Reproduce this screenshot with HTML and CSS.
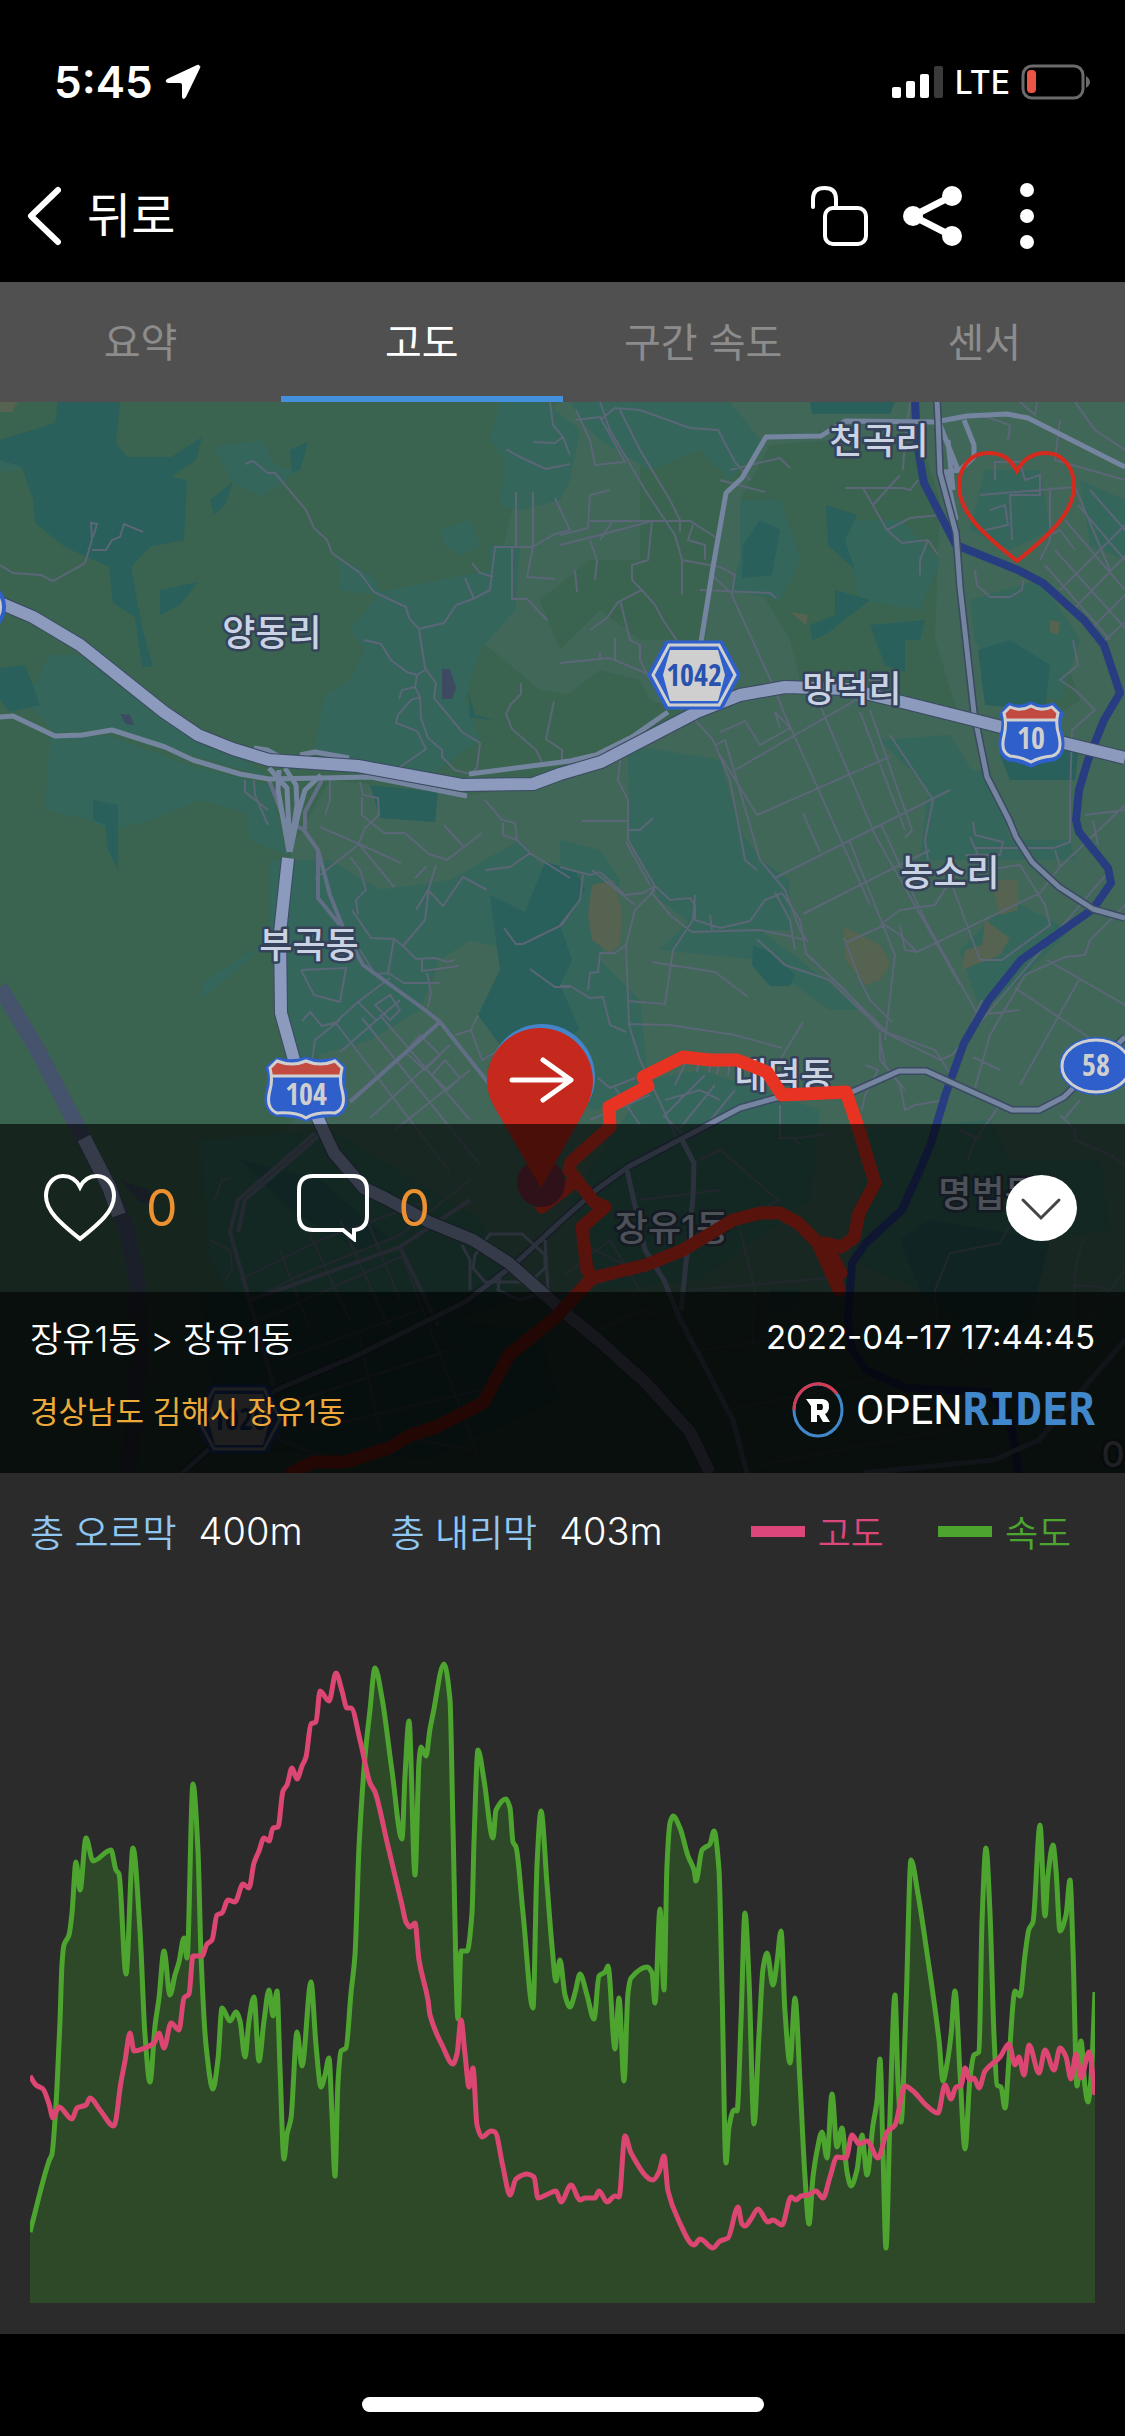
FILE: index.html
```html
<!DOCTYPE html>
<html lang="ko">
<head>
    <meta charset="UTF-8">
    <meta name="viewport" content="width=device-width, initial-scale=1.0">
    <title>오픈라이더 - 고도</title>
    <link rel="stylesheet" href="styles.css">
</head>
<body>

<div class="status-bar">
    <div class="status-left">
        <span class="time">5:45</span>
        <svg class="location-icon" viewBox="0 0 36 36"><path d="M34 2Q35 0 32 1L2 15Q-1 18 3 19H15Q17 19 17 21V33Q18 37 21 33L35 4Q36 1 34 2Z" fill="#fff"/></svg>
    </div>
    <div class="status-right">
        <svg class="signal-icon" viewBox="0 0 52 34">
            <rect x="0" y="22" width="9" height="11" rx="2" fill="#fff"/>
            <rect x="14" y="16" width="9" height="17" rx="2" fill="#fff"/>
            <rect x="28" y="9" width="9" height="24" rx="2" fill="#fff"/>
            <rect x="42" y="1" width="9" height="32" rx="2" fill="#3a3a3a"/>
        </svg>
        <span class="network">LTE</span>
        <svg class="battery-icon" viewBox="0 0 70 36">
            <rect x="2" y="2" width="60" height="32" rx="9" fill="none" stroke="#6b6b6b" stroke-width="3"/>
            <rect x="6" y="6" width="9" height="23" rx="4" fill="#eb5545"/>
            <path d="M65 12Q69 15 69 18T65 24Z" fill="#6b6b6b"/>
        </svg>
    </div>
</div>

<header class="nav-bar">
    <button class="back-button" type="button">
        <svg class="back-icon" viewBox="0 0 34 60"><path d="M31 4L4 30L31 56" fill="none" stroke="#fff" stroke-width="6" stroke-linecap="round" stroke-linejoin="round"/></svg>
        <span>뒤로</span>
    </button>
    <div class="nav-actions">
        <button class="icon-button" type="button" aria-label="공개 설정">
            <svg width="60" height="62" viewBox="0 0 60 62" fill="none" stroke="#fff" stroke-width="4" stroke-linecap="round"><rect x="16" y="23" width="41" height="36" rx="8"/><path d="M4 22V14Q4 3 15.500 3T27 14V22"/></svg>
        </button>
        <button class="icon-button" type="button" aria-label="공유">
            <svg width="60" height="62" viewBox="0 0 60 62" stroke="#fff" stroke-width="7" fill="#fff"><path d="M49 11L10 31L49 51" fill="none"/><g stroke="none"><circle cx="10" cy="31" r="10"/><circle cx="49" cy="11" r="10"/><circle cx="49" cy="51" r="10"/></g></svg>
        </button>
        <button class="icon-button" type="button" aria-label="더보기">
            <svg width="60" height="66" viewBox="0 0 60 66" fill="#fff"><circle cx="30" cy="7" r="7"/><circle cx="30" cy="33" r="7"/><circle cx="30" cy="59" r="7"/></svg>
        </button>
    </div>
</header>

<nav class="tabs">
    <a class="tab" href="#summary">요약</a>
    <a class="tab active" href="#altitude">고도</a>
    <a class="tab" href="#section">구간 속도</a>
    <a class="tab" href="#sensor">센서</a>
</nav>

<section class="map-box">
    <svg class="map" viewBox="0 402 1125 1071" preserveAspectRatio="xMidYMid slice">
        <!-- Land -->
        <rect x="0" y="402" width="1125" height="1071" fill="#3a6450"/>
        <g class="field">
            <path d="M560 402H1125V1473H330L300 1300L270 1140L330 1090L300 1000L290 850L330 780L470 795L560 780L600 760L690 715L600 700L540 690L480 640L500 560L520 480L520 430Z"/>
            <path d="M545 540L580 520L600 560L590 640L560 640Z"/>
        </g>
        <g class="wood">
            <path d="M640 450L680 430L760 440L740 480L722 500L705 640L640 640L600 610L560 650L540 600L590 560L640 560Z"/>
            <path d="M770 445L830 440L920 440L940 500L935 640L960 720L880 695L800 680L790 640L760 590L770 540L740 500Z"/>
            <path d="M1000 640L1060 640L1080 700L1050 720L1000 700L980 680Z"/>
            <path d="M560 700L600 670L640 680L650 700L690 715L600 757L560 770Z"/>
        </g>
        <g class="brush">
            <path d="M500 402L545 402L580 430L570 480L560 500L520 510L500 505L505 460L490 440Z"/>
            <path d="M570 402L730 402L760 440L770 435L730 480L700 450L650 470L600 440L580 420Z"/>
            <path d="M214 447L262 440L276 467L298 470L262 497L233 483Z"/>
            <path d="M0 452L30 455L20 470L0 472Z"/>
            <path d="M338 560L372 575L380 592L490 570L490 545L520 545L515 610L480 650L465 700L480 740L430 775L315 752L318 730L325 695L350 680L365 650L350 630L378 595L340 590Z"/>
            <path d="M440 530L470 520L480 545L460 555L445 545Z"/>
            <path d="M25 700L50 655L80 655L160 718L240 758L270 778L160 745L110 728L55 733Z"/>
            <path d="M45 810L50 738L110 736L190 766L270 785L287 855L250 840L245 812L200 800L150 820L110 830L90 820Z"/>
            <path d="M270 860L330 860L380 890L450 880L520 840L570 900L550 960L470 940L440 960L420 1010L370 1040L300 1060L280 1020L285 930L200 1000L205 980L270 940Z"/>
            <path d="M628 745L720 760L740 830L760 860L790 880L790 930L700 930L660 900L630 840Z"/>
            <path d="M930 770L990 770L1010 840L1070 840L1075 860L920 860L925 820Z"/>
            <path d="M880 740L950 735L990 800L940 800Z"/>
            <path d="M740 500L780 500L800 560L780 600L730 590L740 560Z"/>
            <path d="M840 520L900 520L940 560L920 610L860 600Z"/>
            <path d="M970 600L1040 580L1080 640L1060 700L1000 690L975 640Z"/>
            <path d="M985 470L1040 470L1050 530L1010 550L970 530Z"/>
            <path d="M560 840L600 850L620 880L600 960L640 1000L650 1100L590 1110L560 1040Z"/>
            <path d="M660 950L700 910L760 930L800 960L860 1010L830 1010L760 960Z"/>
            <path d="M650 1080L700 1070L820 1110L810 1200L700 1280L600 1290L570 1200Z"/>
            <path d="M870 1130L990 1120L1010 1160L1100 1160L1110 1230L1000 1250L920 1290L850 1260Z"/>
            <path d="M960 950L1010 900L1070 930L1010 990L980 1010Z"/>
            <path d="M200 1140L330 1130L480 1220L520 1300L430 1330L240 1310L210 1260Z"/>
            <path d="M1080 480L1125 500V560L1090 545Z"/>
            <path d="M200 1290L540 1330L560 1400L430 1460L220 1450Z"/>
        </g>
        <g class="forest">
            <path d="M0 440L55 423L58 402H120L116 443L127 457L171 457L202 437L196 460L171 477L187 480L184 540L150 547L131 567L142 627L153 667H142L135 617L113 603L109 567L65 547L35 523L33 500L22 467L0 460Z"/>
            <path d="M160 590L198 582L180 605L160 615Z"/>
            <path d="M210 500L233 482L225 505L214 515Z"/>
            <path d="M290 450L308 442L300 470L292 472Z"/>
            <path d="M0 668L25 665L40 705L10 712L0 700Z"/>
            <path d="M370 785L438 792L435 822L380 818Z"/>
            <path d="M93 800L118 805L118 870L108 850L105 825L93 820Z"/>
            <path d="M468 690L475 715L495 720L470 718Z"/>
            <path d="M810 402H895L890 414H812Z"/>
            <path d="M743 545L760 520L780 530L772 575L742 578Z"/>
            <path d="M826 505L857 515L845 540L855 570L828 545Z"/>
            <path d="M835 590L870 600L825 635L812 640L810 625L835 615Z"/>
            <path d="M870 625L925 620L920 640L905 640L905 672L885 665Z"/>
            <path d="M978 650L1010 640L1050 665L1045 710L985 705Z"/>
            <path d="M1040 745L1080 740L1075 780L1010 780L1000 755Z"/>
            <path d="M490 895L525 912L545 862L575 870L585 890L560 925L572 960L560 985L580 1030L560 1040L500 1045L478 1015L500 970Z"/>
            <path d="M753 945L775 955L795 975L790 986H770L752 965Z"/>
            <path d="M240 1160L320 1180L390 1240L360 1250L290 1210Z"/>
            <path d="M900 1240L930 1220L1050 1240L1030 1320L980 1340L920 1290Z"/>
            <path d="M770 1290L800 1290L795 1310L770 1310Z"/>
        </g>
        <g class="bare">
            <path d="M592 885L613 880L622 910L620 945L610 953L592 940L588 915Z"/>
            <path d="M844 927L880 945L890 965L880 980L865 985L845 960Z"/>
            <path d="M990 880L1018 880L1018 910L1000 915Z"/>
            <path d="M985 920L1010 938L1000 955L962 970L965 950L982 945Z"/>
            <path d="M790 612L808 615L806 625Z"/>
            <path d="M1050 620L1060 622L1058 635L1050 632Z"/>
            <path d="M0 402H18L12 412H0Z"/>
        </g>
        <g fill="#3d4a62">
            <path d="M442 669H450L456 688L452 699H442Z"/>
            <path d="M120 714L130 715L134 725L126 724Z"/>
            <path d="M120 1180L150 1190L152 1205L140 1202Z"/>
        </g>

        <!-- Streets -->
        <path class="street" d="M0 565L13 573L41 575L53 581L85 563L92 540L91 523L97 524L93 537M92 550H106L112 540L120 537L124 524L143 532
            M245 464L253 461L268 473H275L306 510L314 528L327 540L332 553L360 573L374 592L406 607L409 618L419 629L444 623L456 605L473 599L490 590L495 547H532L555 534L570 530M516 547L516 492M533 547V492M533 547L527 577L555 579M512 548V599H527L547 620M555 498L570 530M465 578L474 599M472 563L480 573L493 577
            M419 629L425 668L436 683L434 698L462 732L480 743L477 768L470 774L455 770L442 757V750L428 738L421 718L420 697L415 687L417 675L425 670M364 640L381 644L391 660L407 672L417 675M415 687L402 690L399 699M420 697L411 700L398 715L396 723L417 731L426 749L400 767M521 683V694L511 704L506 714L512 729L536 750L542 762M554 701L546 739L562 750V762M506 449L520 457L546 469L570 464M550 402L553 425L563 437L570 455M533 442L555 443L563 437
            M254 780L255 795L268 825M245 780V792L268 810M330 780L330 800L325 815M360 782L363 795L378 798L379 815L365 828L358 845L315 879M320 827L359 844L401 863M362 797V815L384 833H405L429 854L447 860L482 833M444 825L463 846M359 844L394 887M350 857L360 870L366 890L356 900L358 914M352 910L371 938L394 939L403 946L416 959L435 958L447 962L455 960M403 946L425 920L429 888L436 865M416 910L428 890L443 906L463 877L487 890M394 939L388 973L375 974L360 950M427 866L415 878M422 959V971L459 966M388 973L404 983H440M427 973L431 993L428 1007M301 970L346 968L340 1002M301 970L314 995L340 1002M302 1021L310 1012L322 1026L337 1022M337 1021L358 1002L390 978M358 1002L376 1020M312 1060L315 1040L340 1020M335 1022L450 1172M362 1018L480 1165M380 1015L470 1120M350 1100L430 1030M370 1118L450 1045M395 1130L470 1070M340 1052L400 1000M420 1035L440 1055L425 1070L405 1052ZM445 1060L460 1078L447 1090L432 1075ZM375 1005L390 995L400 1010L390 1020Z
            M485 800L502 820L515 823L517 840L530 853L570 878M503 823V835L517 840M530 853L510 867L485 870M504 928L516 944H523L562 925L570 913M530 969L555 987H570M478 1015L471 1030L482 1060L508 1045M471 1030L455 1035"/>
        <path class="street" d="M576 410L590 440L595 465L625 462L600 417L575 420M600 420L615 408L640 410L690 428L718 430L735 462L750 480M600 402L610 430L645 490L675 535L682 560V595M620 410L640 450L670 500L680 520V532M588 528L590 495L610 490M588 528L560 535M590 521H690L720 540M600 540L612 522M560 545L600 535L652 521L648 560L632 565V580L642 590L618 602L607 618L590 630M642 590L655 605L663 620L680 645M590 540L597 560L595 580M575 570L577 592M720 480L765 492M700 590L770 593L776 598M730 470L780 458L790 468M713 576L731 593L775 690L785 715L870 905M682 560L720 567L735 575L732 593M693 525L688 540L705 545V560
            M845 488H903L910 490L918 480M863 488L887 530L902 543L928 540M887 530L910 518L940 515M928 540L920 560V575M928 540L938 555M903 470L905 440L910 402M873 505L900 475
            M980 495L1075 487L1110 570M995 480V462H1020L1025 480L1040 475V495H1010L1012 540M990 510L1005 505L1008 525L985 530M1050 487V540L1040 560M980 415L1010 425L1008 440M1020 402L1035 415L1037 402M1075 402L1095 430L1125 450M1060 420L1055 460L1125 480M1065 520L1125 590M1078 505L1125 560M1090 490L1125 530M1055 550L1125 628M1045 565L1110 640M1040 540L1060 530L1075 550M1060 590L1125 525M1075 608L1125 556M1090 630L1125 595M1100 645L1125 622
            M975 570L977 585L990 597L1010 597L1022 590L1023 580M1073 640L1078 665L1060 680L1075 690L1095 710L1072 730L1070 800V842L1054 848H975M560 663L610 658L650 675M620 600L630 640L640 645V660L650 680M615 638V660M600 652V658M620 760L618 780L628 800V840L655 886L650 895M582 821H628M628 830H640L653 818M626 842L650 885
            M695 720L713 740L730 780L745 860L757 870M716 745L725 740L747 815L760 860L785 890L800 930L808 942M720 732L745 721L760 745L790 728L775 712L780 728M735 770L890 680H868M870 710L912 830L905 838M860 712L905 830M890 735L920 780L933 800L925 840L928 860M720 755L757 815L889 757M775 878L950 790M803 813L820 852M849 840L895 955L885 1040M820 705L875 835L960 985M803 914L880 875L930 850M881 824L925 920L978 1015L1020 1010M880 925L900 910L935 905L960 865M845 943L885 925L900 935L917 952L1040 893L1060 867L1125 805
            M560 867L590 875L600 872L625 895L643 893L655 886L670 900L690 898L695 905V920L720 928L750 921L765 900L782 893M695 895L693 920L673 950L665 1004L628 1001M652 893L670 915L692 932L760 930L785 935L805 940M655 890L635 910L626 945L629 1025L640 1060L680 1145M710 915L712 930M592 870L635 905M583 875L580 900L560 925M626 945L615 953H600L598 972L590 973L588 990M560 986H570L590 998L603 997L610 1025L626 1032
            M652 962L715 972L748 997M628 1024L670 1025L735 1035L782 1048M780 1060L803 1022M775 892L790 920L795 950M782 893L800 920L806 953L890 1035L940 1060L952 1055L1110 870M805 953L845 990L880 1030L935 1050L950 1073L982 1000M757 939L785 965L830 980L860 1010L890 1035M844 938L860 980L870 1000L892 1022M952 885L980 960L1002 960L1050 925L1045 905L1020 865L985 870M900 925L905 950L918 952M970 837L978 855M973 822L975 835L1003 842L1000 855H965M1093 820L1098 845M1085 815L1125 810M1060 867L1055 850
            M1125 905L1090 940L1085 955L1065 957L1025 975L990 1035L975 1088M1047 960L1125 1005M1015 988L1060 1018L1100 1045M1080 978L1020 1085M973 1057L1000 1070M880 1032L880 1060L900 1085L905 1110L915 1105L945 1100M865 1065L878 1070L865 1095L862 1110M880 1040L885 1065L905 1090M1000 1105L975 1140L968 1160M960 1130L980 1140M1060 1115L1075 1130V1140L1110 1155L1125 1165M1065 1118L1080 1100
            M598 1078L610 1088L635 1078M615 1088L640 1125M590 1120L650 1095M665 1115L705 1075M680 1128L715 1085M700 1133L735 1090M663 1115L690 1140M665 1100L700 1090L720 1100M675 1085L690 1053M690 1053L730 1060L728 1075M700 1053L697 1072M712 1056L709 1072M720 1058L717 1074
            M780 1105V1138H800L825 1134M793 1138L800 1145M640 1200L720 1190M565 1275L610 1240L640 1290M575 1240L625 1265M560 1295L640 1270M740 1230L755 1290L752 1350M690 1290L830 1278M700 1160L720 1150L778 1200L690 1250M935 1290L950 1253L1000 1243L1010 1225M935 1290L937 1320L990 1390M1083 1240L1075 1270L1073 1340L1125 1270M1073 1285L1100 1287L1125 1300
            M215 1200L222 1180L232 1178M210 1240L230 1250L232 1270L225 1280M240 1280L320 1240L430 1200M250 1300L300 1275L400 1235L470 1180M260 1320L405 1255M280 1250L310 1330M310 1235L350 1320M340 1220L390 1330M365 1215L400 1300M400 1250L480 1460M280 1360L420 1310M300 1400L450 1350M310 1430L480 1390M250 1390L280 1440L330 1460M360 1340L380 1430M420 1440L470 1450M600 1330L640 1310L680 1320M700 1350L850 1330M730 1410L870 1380M760 1465L1000 1420"/>

        <!-- River -->
        <path class="river" d="M915 400L917 443L924 483L956 545L1018 570L1043 583L1084 620L1104 645L1120 693L1104 720L1088 760L1079 790L1076 820L1079 832L1108 868L1111 883L1093 909L1021 960L989 1000L964 1043L946 1093L931 1143L920 1170L902 1210L866 1243L852 1263L848 1320L852 1350L866 1370L906 1388L989 1392L1010 1420L1019 1473"/>

        <!-- Roads -->
        <path class="lane" d="M269 780L285 822L303 829L318 850V898L340 925M305 829V812L322 780M318 850L330 895L344 930L363 965L425 1010L440 1022L490 1085M440 1022L350 1102M315 1133L238 1200L230 1232L275 1390M322 1133L245 1200L238 1232M250 1300L400 1247L470 1200M400 1247L438 1325"/>
        <path class="road" d="M0 717L13 716L55 736L82 735L112 730L165 747L193 760L240 774L269 779L371 777L467 796"/>
        <path class="road" d="M469 774L570 761L596 755L632 737L668 712M300 755L315 752L349 758M254 748L267 750L280 757"/>
        <path class="road" d="M701 642L713 567L726 493L742 478L766 437L821 436L845 421L935 422L967 416L1007 414L1028 418L1125 467"/>
        <path class="road" d="M938 420L958 470M964 420L974 445V457L960 470L938 473M946 473L956 520M948 440L953 490M269 768L287 788L290 852M279 770L278 790L289 852M285 768L296 785L297 805L290 852M321 775L305 790L298 815L290 852"/>
        <path class="road-edge" d="M937 400L938 420L940 473L956 533L960 587L974 713L987 777L1009 820L1016 837L1032 862L1059 887L1093 909L1125 918"/>
        <path class="road" d="M937 400L938 420L940 473L956 533L960 587L974 713L987 777L1009 820L1016 837L1032 862L1059 887L1093 909L1125 918"/>
        <path class="road-edge" d="M1125 1037L1064 1097L1039 1110H1012L926 1071H899L852 1092L776 1098L740 1108L628 1167L596 1190L560 1222L516 1263L465 1302L358 1355L276 1390L182 1473"/>
        <path class="road" d="M1125 1037L1064 1097L1039 1110H1012L926 1071H899L852 1092L776 1098L740 1108L628 1167L596 1190L560 1222L516 1263L465 1302L358 1355L276 1390L182 1473"/>
        <path class="road" d="M627 1170L645 1250L664 1280L679 1317L733 1420L747 1473M682 1140L694 1163L693 1197L681 1310M863 1473L994 1460L1039 1440L1125 1340"/>
        <path d="M475 1255L490 1234H522L545 1255V1268L530 1282H485L473 1268ZM462 1245L470 1260V1290M545 1240L548 1290L520 1300L498 1290L500 1275" fill="none" stroke="#75839e" stroke-width="3"/>
        <path d="M0 987L36 1047L78 1128L109 1187L127 1230L137 1280L140 1353L129 1473" fill="none" stroke="#46536c" stroke-width="16"/>
        <path d="M84 1138L109 1187L119 1215" fill="none" stroke="#8c9bbd" stroke-width="14"/>
        <path class="highway-edge" d="M0 603L33 617L80 645L164 712L198 735L233 749L269 760L358 766L462 785L533 784L560 774L601 762L697 712L740 695L785 687L848 689L902 702L974 720L1064 743L1125 758M288 858L280 933L281 1013L294 1060L320 1123L334 1153L364 1188L385 1198L429 1222L473 1240L509 1263L570 1317L596 1338L646 1383L690 1432L710 1473"/>
        <path class="highway" d="M0 603L33 617L80 645L164 712L198 735L233 749L269 760L358 766L462 785L533 784L560 774L601 762L697 712L740 695L785 687L848 689L902 702L974 720L1064 743L1125 758M288 858L280 933L281 1013L294 1060L320 1123L334 1153L364 1188L385 1198L429 1222L473 1240L509 1263L570 1317L596 1338L646 1383L690 1432L710 1473"/>

        <!-- Place names -->
        <g class="place">
            <text x="272" y="646">양동리</text>
            <text x="879" y="454">천곡리</text>
            <text x="852" y="702">망덕리</text>
            <text x="950" y="886">농소리</text>
            <text x="309" y="958">부곡동</text>
            <text x="784" y="1089">내덕동</text>
            <text x="672" y="1241">장유1동</text>
            <text x="988" y="1207">명법동</text>
            <text x="1113" y="1467">0</text>
        </g>

        <!-- Route signs -->
        <circle cx="-20" cy="607" r="24" fill="#ccc" stroke="#2e5fcb" stroke-width="4"/>
        <g id="hex-sign">
            <path d="M667 643H721L738 675L721 707H667L650 675Z" fill="#2e5fcb" stroke="#2e5fcb" stroke-width="5" stroke-linejoin="round"/>
            <path d="M669 645H719L735 675L719 705H669L653 675Z" fill="none" stroke="#cfcfcf" stroke-width="3"/>
            <path d="M670 650H718L725 675L718 701H670L663 675Z" fill="#cfcfcf"/>
        </g>
        <text class="sign sign-blue" x="694" y="686">1042</text>
        <use href="#hex-sign" x="-455" y="744"/>
        <text class="sign sign-blue" x="239" y="1430">1020</text>
        <g>
            <path d="M1009 705Q1020 710 1031 704Q1042 710 1053 705L1061 714Q1057 724 1061 735Q1065 755 1053 759Q1040 760 1031 765Q1022 760 1009 759Q998 754 1002 735Q1006 724 1002 714Z" fill="#2e5fcb" stroke="#2e5fcb" stroke-width="5" stroke-linejoin="round"/>
            <path d="M1005 719V713L1010 707Q1021 712 1031 706Q1041 712 1052 707L1058 713V719Z" fill="#c24a41"/>
            <path d="M1010 707Q1021 712 1031 706Q1041 712 1052 707L1058 713Q1055 724 1059 736Q1063 753 1052 756Q1040 757 1031 762Q1022 757 1010 756Q1000 752 1004 736Q1007 724 1004 713ZM1005 720H1057" fill="none" stroke="#cfcfcf" stroke-width="3"/>
        </g>
        <text class="sign" x="1031" y="749">10</text>
        <g>
            <path d="M277 1060Q292 1064 306 1059Q320 1064 335 1060L344 1068Q341 1080 344 1090Q349 1110 336 1114Q315 1115 306 1119Q297 1115 277 1114Q264 1110 268 1090Q272 1080 268 1068Z" fill="#2e5fcb" stroke="#2e5fcb" stroke-width="5" stroke-linejoin="round"/>
            <path d="M272 1075L270 1068L277 1062Q292 1067 306 1061Q320 1067 335 1062L342 1068L340 1075Z" fill="#c24a41"/>
            <path d="M277 1061Q292 1067 306 1061Q320 1067 335 1061L342 1068Q339 1080 342 1090Q347 1108 335 1113Q315 1112 306 1118Q297 1112 277 1113Q265 1108 270 1090Q273 1080 270 1068ZM272 1076H340" fill="none" stroke="#cfcfcf" stroke-width="3"/>
        </g>
        <text class="sign" x="306" y="1105">104</text>
        <ellipse cx="1096" cy="1066" rx="37" ry="29" fill="#2e5fcb"/>
        <ellipse cx="1096" cy="1066" rx="34" ry="26" fill="none" stroke="#cfcfcf" stroke-width="3"/>
        <text class="sign" x="1096" y="1076">58</text>

        <!-- Ride track -->
        <path class="track" d="M542 1207L574 1182M594 1278L587 1270L582 1227L605 1207L594 1202L569 1170L571 1162L610 1127L609 1107L648 1086L643 1077L683 1057L710 1060L737 1060L767 1072L782 1095L846 1092L859 1130L875 1183L859 1213L854 1238L841 1247L825 1243L841 1273L835 1274L839 1290L818 1243L798 1223L780 1213H760L733 1220L683 1250L646 1265L592 1278L556 1317L509 1355L483 1403L436 1427L411 1435L389 1448L345 1462H313L291 1473"/>
        <circle cx="541" cy="1183" r="24" fill="#7b2f45"/>
        <circle cx="542" cy="1077" r="53" fill="#4485c9"/>
        <path d="M541 1188L495 1108Q487 1095 487 1081A53 53 0 0 1 593 1081Q593 1095 585 1110Z" fill="#c5281c"/>
        <path d="M512 1080H569M543 1060L571 1080L543 1100" fill="none" stroke="#fff" stroke-width="5" stroke-linecap="round" stroke-linejoin="round"/>
        <path d="M1017 471C1009 456 999 453 988 453C970 453 959 468 959 486C959 514 988 538 1017 561C1046 538 1074 514 1074 486C1074 468 1063 453 1046 453C1034 453 1024 457 1017 471Z" fill="none" stroke="#d52b1f" stroke-width="4"/>
    </svg>

    <div class="map-overlay">
        <div class="action-bar">
            <button class="count-button" type="button" aria-label="좋아요">
                <svg width="72" height="68" viewBox="0 0 72 68"><path d="M36 13C32 5 26 2 19 2C9 2 2 11 2 22C2 38 19 51 36 65C53 51 70 38 70 22C70 11 63 2 53 2C46 2 40 5 36 13Z" fill="none" stroke="#fff" stroke-width="4"/></svg>
                <span>0</span>
            </button>
            <button class="count-button" type="button" aria-label="댓글">
                <svg width="72" height="68" viewBox="0 0 72 68"><path d="M16 2H56Q70 2 70 16V42Q70 55 57 56V65L46 56H16Q2 56 2 42V16Q2 2 16 2Z" fill="none" stroke="#fff" stroke-width="4"/></svg>
                <span>0</span>
            </button>
            <button class="fold-button" type="button" aria-label="접기">
                <svg width="71" height="66" viewBox="0 0 71 66"><path d="M17 25L35 43L53 25" fill="none" stroke="#444" stroke-width="3" stroke-linecap="round"/></svg>
            </button>
        </div>
        <div class="ride-info">
            <div class="ride-row">
                <span class="ride-title">장유1동 &gt; 장유1동</span>
                <span class="ride-date">2022-04-17 17:44:45</span>
            </div>
            <div class="ride-row">
                <span class="ride-place">경상남도 김해시 장유1동</span>
                <span class="logo">
                    <svg width="52" height="56" viewBox="0 0 52 56">
                        <ellipse cx="26" cy="28" rx="24" ry="26" fill="none" stroke="#4187cb" stroke-width="3"/>
                        <path d="M2 28A24 26 0 0 1 45 12" fill="none" stroke="#d63950" stroke-width="3"/>
                        <path d="M14 17H31Q38 18 37 26Q36 31 33 32L38 40H31L27 33H25V40H19V24Z" fill="#fff"/>
                        <path d="M25 22H30Q32 25 30 28H25Z" fill="#07100c"/>
                    </svg>
                    <span class="logo-open">OPEN</span><span class="logo-rider">RIDER</span>
                </span>
            </div>
        </div>
    </div>
</section>

<section class="chart-panel">
    <div class="stats">
        <dl class="stat">
            <dt>총 오르막</dt>
            <dd>400m</dd>
        </dl>
        <dl class="stat">
            <dt>총 내리막</dt>
            <dd>403m</dd>
        </dl>
        <div class="legend">
            <span class="legend-item altitude">고도</span>
            <span class="legend-item speed">속도</span>
        </div>
    </div>
    <svg class="chart" viewBox="0 0 1125 714">
        <clipPath id="plot"><rect x="30" y="0" width="1065" height="683"/></clipPath>
        <g clip-path="url(#plot)">
            <path class="speed-area" id="speed-area"/>
            <path class="speed-line" id="speed-line"/>
            <path class="altitude-line" id="altitude-line"/>
        </g>
    </svg>
</section>

<footer class="home-area">
    <div class="home-indicator"></div>
</footer>

<script src="chart.js"></script>
</body>
</html>
```

FILE: styles.css
```css
body {
    margin: 0;
    min-height: 100vh;
    display: flex;
    flex-direction: column;
    background-color: #000;
    color: #fff;
    font-family: Inter, "Noto Sans CJK KR", sans-serif;
}
button {
    padding: 0;
    border: none;
    background: none;
    color: inherit;
    font-family: inherit;
    cursor: pointer;
}
svg {
    display: block;
}

/* Status bar */
.status-bar {
    display: flex;
    justify-content: space-between;
    align-items: center;
    box-sizing: border-box;
    height: 150px;
    padding: 14px 34px 0 54px;
}
.status-left {
    display: flex;
    align-items: center;
    gap: 12px;
}
.status-right {
    display: flex;
    align-items: center;
    gap: 11px;
}
.time {
    font-size: 44px;
    font-weight: 600;
}
.network {
    font-size: 32px;
    font-weight: 500;
}
.location-icon {
    width: 36px;
    height: 36px;
}
.signal-icon {
    width: 52px;
    height: 34px;
}
.battery-icon {
    width: 70px;
    height: 36px;
}

/* Navigation */
.nav-bar {
    display: flex;
    justify-content: space-between;
    align-items: center;
    box-sizing: border-box;
    height: 132px;
    padding: 0 68px 0 27px;
}
.back-button {
    display: flex;
    align-items: center;
    gap: 26px;
    font-size: 48px;
    font-weight: 400;
    line-height: 60px;
}
.back-icon {
    width: 34px;
    height: 60px;
}
.nav-actions {
    display: flex;
    align-items: center;
    gap: 34px;
}

/* Tabs */
.tabs {
    display: grid;
    grid-template-columns: repeat(4, 1fr);
    height: 120px;
    background-color: #505050;
}
.tab {
    box-sizing: border-box;
    height: 120px;
    padding-top: 8px;
    border-bottom: 6px solid transparent;
    color: #8c8c8c;
    font-size: 40px;
    line-height: 106px;
    text-align: center;
    text-decoration: none;
}
.tab.active {
    border-color: #4490dc;
    color: #fff;
}

/* Map */
.map-box {
    position: relative;
}
.map {
    width: 100%;
    height: auto;
}
.field {
    fill: #406758;
}
.wood {
    fill: #3a6450;
}
.brush {
    fill: #34665c;
}
.forest {
    fill: #29605c;
}
.bare {
    fill: #566350;
}
.street {
    fill: none;
    stroke: #5b6677;
    stroke-width: 2;
}
.lane {
    fill: none;
    stroke: #626e85;
    stroke-width: 4;
}
.river {
    fill: none;
    stroke: #283c82;
    stroke-width: 8;
    stroke-linejoin: round;
}
.road {
    fill: none;
    stroke: #7585a0;
    stroke-width: 5;
    stroke-linejoin: round;
}
.road-edge {
    fill: none;
    stroke: #3b4962;
    stroke-width: 8;
}
.highway {
    fill: none;
    stroke: #8c9bbd;
    stroke-width: 12;
    stroke-linejoin: round;
}
.highway-edge {
    fill: none;
    stroke: #3b4962;
    stroke-width: 14;
    stroke-linejoin: round;
}
.place {
    fill: #c9d3e4;
    stroke: #35425a;
    stroke-width: 5;
    stroke-linejoin: round;
    paint-order: stroke;
    font-size: 36px;
    font-weight: 500;
    text-anchor: middle;
}
.sign {
    fill: #cfcfcf;
    font-family: "Liberation Sans Narrow", "Open Sans Condensed", Roboto, sans-serif;
    font-size: 30px;
    font-weight: 700;
    text-anchor: middle;
}
.sign-blue {
    fill: #2752b0;
}
.track {
    fill: none;
    stroke: #e83323;
    stroke-width: 13;
    stroke-linecap: round;
    stroke-linejoin: round;
}

/* Map overlay */
.map-overlay {
    position: absolute;
    right: 0;
    bottom: 0;
    left: 0;
}
.action-bar {
    display: flex;
    align-items: center;
    gap: 119px;
    height: 168px;
    padding: 0 48px 0 44px;
    background-color: rgba(0, 0, 0, 0.62);
}
.count-button {
    display: flex;
    align-items: center;
    gap: 30px;
    color: #ec9030;
    font-size: 50px;
    line-height: 68px;
}
.fold-button {
    margin-left: auto;
    border-radius: 50%;
    background-color: #fff;
}
.ride-info {
    display: flex;
    flex-direction: column;
    gap: 16px;
    box-sizing: border-box;
    height: 181px;
    padding: 16px 30px 0;
    background-color: rgba(0, 0, 0, 0.85);
}
.ride-row {
    display: flex;
    justify-content: space-between;
    align-items: center;
    height: 57px;
    white-space: nowrap;
}
.ride-title {
    font-size: 35px;
    font-weight: 350;
}
.ride-date {
    font-size: 33px;
}
.ride-place {
    color: #edaa3a;
    font-size: 31px;
}
.logo {
    display: flex;
    align-items: center;
    line-height: 56px;
}
.logo-open {
    margin-left: 12px;
    font-family: Roboto, sans-serif;
    font-size: 41px;
}
.logo-rider {
    color: #4187cb;
    font-family: "DejaVu Sans Mono", monospace;
    font-size: 44px;
    font-weight: 700;
}

/* Chart */
.chart-panel {
    background-color: #2b2b2b;
}
.stats {
    display: flex;
    align-items: center;
    gap: 88px;
    height: 116px;
    margin-bottom: 31px;
    padding: 0 62px 0 30px;
    font-size: 38px;
    white-space: nowrap;
}
.stat {
    display: flex;
    align-items: center;
    gap: 22px;
    margin: 0;
}
.stat dt {
    color: #8fc6f2;
    font-size: 37px;
    font-weight: 350;
}
.stat dd {
    margin: 0;
    font-weight: 350;
}
.legend {
    display: flex;
    gap: 54px;
    margin-left: auto;
    font-size: 36px;
    font-weight: 350;
}
.legend-item {
    display: flex;
    align-items: center;
    gap: 13px;
}
.legend-item::before {
    content: "";
    width: 54px;
    height: 11px;
    background-color: currentColor;
}
.legend-item.altitude {
    color: #dc467b;
}
.legend-item.speed {
    color: #4da530;
}
.chart {
    width: 100%;
    height: auto;
}
.speed-area {
    fill: #2d4927;
}
.speed-line {
    fill: none;
    stroke: #4da530;
    stroke-width: 5;
}
.altitude-line {
    fill: none;
    stroke: #dc4673;
    stroke-width: 5;
}

/* Home indicator */
.home-area {
    display: flex;
    flex: 1;
    justify-content: center;
    align-items: flex-end;
    padding: 24px;
}
.home-indicator {
    width: 402px;
    height: 15px;
    border-radius: 8px;
    background-color: #fff;
}
```

FILE: chart.js
```js
const BASELINE = 683;

const speed = [
    [30, 612], [49, 541], [52, 534], [55, 500], [57, 467], [60, 401], [62, 344], [64, 325], [69, 315], [72, 293],
    [76, 242], [80, 270], [86, 218], [93, 241], [111, 230], [116, 250], [119, 254], [126, 354], [133, 228], [140, 311],
    [145, 415], [150, 462], [155, 406], [159, 378], [164, 331], [170, 375], [175, 355], [179, 342], [184, 318], [187, 338],
    [193, 164], [198, 231], [201, 335], [206, 425], [213, 469], [218, 439], [222, 388], [230, 401], [236, 392], [240, 401],
    [245, 437], [249, 401], [254, 377], [259, 441], [264, 401], [269, 370], [273, 396], [277, 371], [280, 448], [284, 539],
    [287, 514], [291, 498], [297, 412], [302, 446], [311, 362], [316, 425], [321, 467], [325, 455], [329, 438], [332, 495],
    [335, 556], [338, 462], [341, 431], [346, 428], [351, 373], [355, 335], [359, 227], [365, 137], [370, 90], [375, 48],
    [382, 78], [392, 151], [402, 219], [405, 156], [409, 101], [415, 255], [419, 142], [421, 127], [426, 136], [430, 109],
    [433, 94], [444, 44], [450, 80], [453, 208], [458, 399], [461, 331], [467, 331], [472, 293], [474, 222], [478, 130],
    [484, 160], [493, 218], [496, 190], [506, 179], [510, 188], [513, 222], [516, 227], [523, 293], [533, 388], [537, 245],
    [541, 191], [547, 264], [552, 326], [556, 361], [560, 340], [565, 375], [570, 387], [575, 373], [580, 354], [587, 375],
    [594, 399], [599, 356], [605, 352], [608, 346], [615, 429], [619, 378], [624, 461], [628, 373], [631, 358], [647, 347],
    [652, 353], [655, 383], [660, 289], [664, 370], [667, 245], [670, 203], [673, 196], [680, 208], [688, 236], [694, 250],
    [696, 261], [702, 230], [710, 224], [714, 211], [719, 250], [722, 368], [726, 543], [729, 507], [734, 490], [737, 491],
    [741, 401], [745, 293], [749, 359], [754, 504], [759, 415], [763, 349], [767, 333], [773, 365], [777, 342], [781, 311],
    [785, 392], [790, 443], [795, 378], [800, 462], [805, 557], [809, 604], [813, 557], [817, 531], [822, 512], [827, 538],
    [832, 474], [837, 527], [842, 508], [847, 552], [851, 566], [857, 550], [862, 515], [867, 555], [873, 505], [877, 481],
    [880, 439], [883, 533], [886, 628], [890, 495], [895, 375], [898, 462], [901, 502], [906, 387], [911, 240], [918, 274],
    [927, 333], [939, 420], [943, 461], [947, 444], [951, 415], [955, 371], [960, 453], [965, 529], [970, 458], [974, 435],
    [979, 432], [982, 302], [986, 228], [990, 293], [994, 415], [997, 465], [1001, 467], [1005, 488], [1009, 439], [1015, 371],
    [1020, 376], [1025, 335], [1029, 309], [1033, 302], [1040, 205], [1045, 296], [1048, 255], [1053, 225], [1056, 250], [1060, 311],
    [1066, 295], [1070, 260], [1073, 330], [1077, 466], [1081, 421], [1085, 467], [1088, 482], [1091, 458], [1095, 372]
];

const altitude = [
    [30, 456], [36, 465], [43, 469], [49, 484], [53, 498], [59, 487], [72, 499], [77, 488], [86, 485], [90, 478],
    [100, 490], [114, 506], [121, 462], [125, 441], [130, 413], [134, 431], [145, 428], [154, 423], [159, 413], [164, 428],
    [171, 403], [179, 410], [184, 378], [189, 374], [193, 336], [202, 336], [207, 324], [212, 320], [217, 295], [222, 293],
    [228, 280], [235, 282], [243, 264], [249, 268], [254, 243], [259, 231], [264, 218], [269, 221], [273, 208], [278, 207],
    [283, 171], [287, 165], [292, 148], [297, 159], [302, 146], [306, 137], [311, 104], [316, 102], [320, 71], [329, 81],
    [336, 53], [342, 71], [347, 88], [351, 88], [360, 120], [370, 163], [375, 172], [387, 222], [402, 285], [406, 302],
    [410, 307], [415, 303], [419, 340], [428, 380], [430, 395], [442, 425], [453, 444], [457, 434], [461, 400], [465, 434],
    [469, 467], [473, 448], [477, 505], [482, 517], [491, 511], [495, 512], [503, 547], [510, 575], [516, 559], [527, 554],
    [534, 557], [538, 578], [550, 573], [556, 571], [561, 582], [571, 565], [580, 580], [585, 578], [595, 578], [599, 571],
    [607, 582], [615, 576], [619, 577], [625, 516], [631, 533], [653, 560], [659, 552], [664, 536], [668, 571], [678, 599],
    [694, 625], [700, 619], [713, 628], [720, 621], [728, 618], [738, 587], [742, 604], [745, 606], [751, 599], [758, 589],
    [768, 602], [773, 600], [782, 605], [791, 577], [796, 580], [801, 576], [808, 575], [816, 571], [823, 578], [830, 557],
    [837, 537], [846, 538], [852, 515], [859, 524], [867, 521], [878, 538], [887, 512], [895, 505], [905, 466], [913, 471],
    [927, 486], [938, 493], [945, 465], [951, 479], [956, 467], [961, 466], [965, 448], [970, 460], [974, 458], [979, 468],
    [985, 451], [1000, 437], [1009, 424], [1015, 445], [1019, 437], [1024, 455], [1029, 425], [1039, 453], [1045, 430], [1054, 450],
    [1060, 428], [1066, 437], [1071, 459], [1076, 434], [1081, 458], [1089, 432], [1095, 475]
];

// Smooth curve that never overshoots its points
function smoothPath(points) {
    const slopes = [];
    const tangents = [];
    for (let i = 0; i < points.length - 1; i++) {
        slopes.push((points[i + 1][1] - points[i][1]) / (points[i + 1][0] - points[i][0]));
    }
    for (let i = 0; i < points.length; i++) {
        if (i === 0) {
            tangents.push(slopes[0]);
        } else if (i === points.length - 1) {
            tangents.push(slopes[i - 1]);
        } else if (slopes[i - 1] * slopes[i] <= 0) {
            tangents.push(0);
        } else {
            tangents.push(2 * slopes[i - 1] * slopes[i] / (slopes[i - 1] + slopes[i]));
        }
    }

    let path = `M${points[0][0]},${points[0][1]}`;
    for (let i = 0; i < points.length - 1; i++) {
        const [x0, y0] = points[i];
        const [x1, y1] = points[i + 1];
        const dx = (x1 - x0) / 3;
        path += `C${x0 + dx},${y0 + dx * tangents[i]} ${x1 - dx},${y1 - dx * tangents[i + 1]} ${x1},${y1}`;
    }
    return path;
}

const speedPath = smoothPath(speed);
document.getElementById('speed-line').setAttribute('d', speedPath);
document.getElementById('speed-area').setAttribute('d', `${speedPath}V${BASELINE}H30Z`);
document.getElementById('altitude-line').setAttribute('d', smoothPath(altitude));
```
